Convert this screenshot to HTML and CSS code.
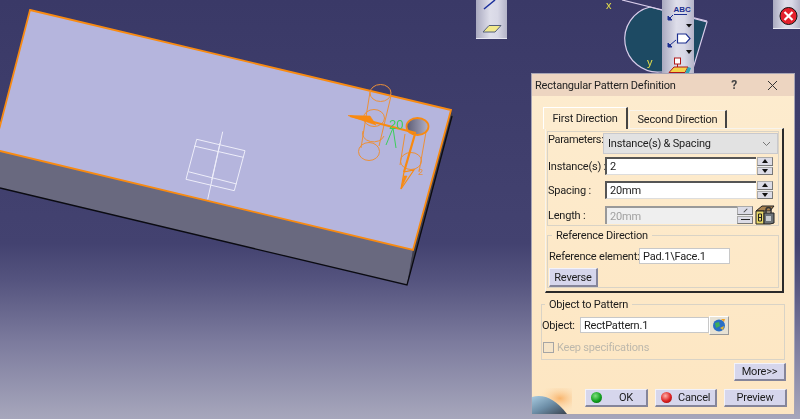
FILE: index.html
```html
<!DOCTYPE html>
<html lang="en">
<head>
<meta charset="utf-8">
<title>Rectangular Pattern Definition</title>
<link rel="stylesheet" href="styles.css">
</head>
<body>
<main class="stage">
  <svg class="scene" width="800" height="419" viewBox="0 0 800 419" aria-hidden="true">
    <defs>
      <linearGradient id="holeFill" x1="0" x2="1" y1="0" y2="0">
        <stop offset="0" stop-color="#5c5c74"/><stop offset="1" stop-color="#b2b2c8"/>
      </linearGradient>
    </defs>
    <!-- compass -->
    <path class="compass" d="M650 7 A33 33 0 0 0 660 72 L692 72 L707 22 Z"/>
    <path class="compass-line" d="M622 0 L707 21"/>
    <text class="axis" x="606" y="9">x</text>
    <text class="axis" x="647" y="66">y</text>
    <!-- solid -->
    <path class="side" d="M0 151 L413 250 L407 285 L0 188 Z"/>
    <path class="side-dark" d="M413 250 L451 111 L453 116 L407 285 Z"/>
    <path class="black" d="M0 188 L407 285 L452 116"/>
    <path class="face" d="M30 10 L451 110 L413 250 L0 151 L-2 151 L-2 133 L0 126 Z"/>
    <!-- sketch -->
    <g class="sketch">
      <path d="M196.700 139.300 L245 150.700 L234.300 190.700 L186 179.300 Z"/>
      <path d="M194 146 L243.300 157.300 M188.300 171.700 L236.700 184"/>
      <path d="M222.700 131.700 L207.700 199.300 M220 143 L211.700 180"/>
    </g>
    <!-- pattern preview -->
    <g class="thin">
      <ellipse cx="380.500" cy="93" rx="10.500" ry="8.500"/>
      <ellipse cx="374" cy="118" rx="10.500" ry="8.500"/>
      <ellipse cx="369" cy="151.500" rx="10.500" ry="9"/>
      <path d="M370 92 L361 148 M391 96 L379 146 M363 131 A10.500 8 0 0 0 384 136"/>
      <path d="M405 134 L400 165 M426 132 L419 172"/>
      <ellipse cx="411" cy="161" rx="10.500" ry="8.500"/>
    </g>
    <ellipse class="hole" cx="417.500" cy="126.500" rx="11" ry="8.500"/>
    <path class="thick" d="M350 116 L416 133 M415 134 L404 172"/>
    <path class="head" d="M348 115.500 L370 116 L376 125 Z"/>
    <path class="head-open" d="M401 189 L404 172 L414 170 Z"/>
    <path class="head" d="M401 189 L404 176 L407 176 Z"/>
    <path class="green-line" d="M393 128 L386 145 M393 128 L396 148"/>
    <text class="dim-green" x="389" y="129">20</text>
    <text class="dim-orange" x="418" y="175">2</text>
  </svg>

  <!-- toolbars -->
  <aside class="toolbar toolbar-left">
    <svg width="30" height="39" viewBox="0 0 30 39" aria-hidden="true">
      <path d="M8 9 L19 0" stroke="#1a2f9c" stroke-width="1.500" fill="none"/>
      <path d="M7 32 L13 25.500 L25 25.500 L19 32 Z" fill="#f2e98c" stroke="#55607a"/>
    </svg>
  </aside>
  <aside class="toolbar toolbar-mid">
    <svg width="32" height="73" viewBox="0 0 32 73" aria-hidden="true">
      <text x="11.500" y="12" class="abc">ABC</text>
      <path d="M12 14.500 H25 M11 15 L7 19" stroke="#1c2f8f" fill="none"/>
      <path d="M6 20 L6 16 L10 20 Z" fill="#1c2f8f" stroke="#1c2f8f"/>
      <path d="M24 24 L30 24 L27 27.500 Z" fill="#111"/>
      <path d="M15.500 34 H24 L28 38.500 L24 43 H15.500 Z" fill="#fff" stroke="#1c2f8f" stroke-width="1.200"/>
      <path d="M8 45 L14 40" stroke="#1c2f8f" fill="none"/>
      <path d="M6 47 L6 43 L10 47 Z" fill="#1c2f8f" stroke="#1c2f8f"/>
      <path d="M24 50 L30 50 L27 54 Z" fill="#111"/>
      <rect x="12.500" y="58" width="6" height="6" fill="#fff" stroke="#b01818"/>
      <path d="M15.500 64 V68" stroke="#b01818"/>
      <path d="M7 72.500 L12 67 H26 L23 72.500 Z" fill="#f3d34a" stroke="#b01818"/>
      <path d="M26 67 L23 73 H27 L29 68 Z" fill="#2fa6b8"/>
    </svg>
  </aside>
  <aside class="toolbar toolbar-close">
    <svg width="28" height="29" viewBox="0 0 28 29" aria-hidden="true">
      <circle cx="15.500" cy="16" r="8.500" fill="#e3202c" stroke="#111"/>
      <path d="M11.500 12 L19.500 20 M19.500 12 L11.500 20" stroke="#fff" stroke-width="2.200"/>
    </svg>
  </aside>

  <!-- dialog -->
  <section class="dialog">
    <header class="titlebar">
      <span class="title">Rectangular Pattern Definition</span>
      <span class="help">?</span>
      <svg class="close" width="11" height="11" viewBox="0 0 11 11" aria-hidden="true"><path d="M1 1 L10 10 M10 1 L1 10" stroke="#333" fill="none"/></svg>
    </header>
    <div class="body">
      <svg class="globe" width="40" height="26" viewBox="0 0 40 26" aria-hidden="true">
        <defs>
          <radialGradient id="glow" cx="0.700" cy="0.400" r="0.600">
            <stop offset="0" stop-color="#f8b46c"/><stop offset="1" stop-color="#fde9c8" stop-opacity="0"/>
          </radialGradient>
          <linearGradient id="earth" x1="0" x2="1" y1="0" y2="1">
            <stop offset="0" stop-color="#a8cbe0"/><stop offset=".5" stop-color="#6c8da6"/><stop offset="1" stop-color="#39424e"/>
          </linearGradient>
        </defs>
        <rect width="40" height="26" fill="url(#glow)"/>
        <path d="M0 9 Q18 4 35 26 H0 Z" fill="url(#earth)"/>
      </svg>
      <nav class="tabs">
        <span class="tab tab-active">First Direction</span>
        <span class="tab">Second Direction</span>
      </nav>
      <div class="panel">
        <div class="params">
          <div class="row row-select">
            <label class="lbl lbl-params">Parameters:</label>
            <div class="select"><span>Instance(s) &amp; Spacing</span>
              <svg width="9" height="6" viewBox="0 0 9 6" aria-hidden="true"><path d="M1 1 L4.500 4.500 L8 1" stroke="#777" fill="none"/></svg>
            </div>
          </div>
          <div class="row row-instances">
            <label class="lbl">Instance(s) :</label>
            <div class="input input-num">2</div>
            <div class="spin"><i class="up"></i><i class="down"></i></div>
          </div>
          <div class="row row-spacing">
            <label class="lbl">Spacing :</label>
            <div class="input input-num">20mm</div>
            <div class="spin"><i class="up"></i><i class="down"></i></div>
          </div>
          <div class="row row-length">
            <label class="lbl">Length :</label>
            <div class="input input-len">20mm</div>
            <div class="spin spin-off"><i class="mark-a"></i><i class="mark-b"></i></div>
            <svg class="kw" width="20" height="20" viewBox="0 0 20 20" aria-hidden="true">
              <path d="M1 6 L7 1 H19 L15 6 Z" fill="#a8814e" stroke="#222"/>
              <path d="M1 6 H9 V19 H1 Z" fill="#e9d86a" stroke="#222"/>
              <path d="M3.500 9 H6.500 V16 H3.500 Z M3.500 12.500 H6.500" fill="none" stroke="#222"/>
              <path d="M9 8 H19 V18 L15 19 H9 Z" fill="#6d7378" stroke="#222"/>
              <path d="M11 8 V5 A2.500 2.500 0 0 1 16 5 V8" fill="none" stroke="#333" stroke-width="1.500"/>
              <rect x="11" y="11" width="5" height="5" fill="#c8ccd0"/>
            </svg>
          </div>
        </div>
        <fieldset class="group group-ref">
          <legend>Reference Direction</legend>
          <div class="ref-row">
            <label class="lbl-plain lbl-ref">Reference element:</label>
            <div class="input input-ref">Pad.1\Face.1</div>
          </div>
          <button class="btn btn-reverse" type="button">Reverse</button>
        </fieldset>
      </div>
      <fieldset class="group group-object">
        <legend>Object to Pattern</legend>
        <div class="obj-row">
          <label class="lbl-plain lbl-obj">Object:</label>
          <div class="input input-obj">RectPattern.1</div>
          <button class="iconbtn" type="button" aria-label="Pick">
            <svg width="14" height="14" viewBox="0 0 14 14" aria-hidden="true">
              <circle cx="7" cy="7.500" r="6" fill="#2a6fc4"/>
              <path d="M3 5 L7 4 L8 8 L4 10 Z" fill="#3fae5a"/>
              <path d="M8 10 L12 8 L11 12 Z" fill="#e8b52c"/>
              <path d="M9 1 L13 1 L12 4 Z" fill="#f0a020"/>
            </svg>
          </button>
        </div>
        <div class="keep">
          <span class="check"></span>
          <span class="keep-label">Keep specifications</span>
        </div>
      </fieldset>
      <div class="more-row"><button class="btn btn-more" type="button">More&gt;&gt;</button></div>
      <div class="actions">
        <button class="btn btn-act btn-ok" type="button"><i class="ball ball-green"></i><span>OK</span></button>
        <button class="btn btn-act btn-cancel" type="button"><i class="ball ball-red"></i><span>Cancel</span></button>
        <button class="btn btn-act btn-preview" type="button"><span>Preview</span></button>
      </div>
    </div>
  </section>
</main>
</body>
</html>
```
FILE: styles.css
```css
* { box-sizing: border-box; }
html, body { margin: 0; padding: 0; }
body { width: 800px; height: 419px; overflow: hidden; font-family: Roboto, "Liberation Sans", Arial, sans-serif; }

.stage {
  position: relative;
  width: 800px;
  height: 419px;
  overflow: hidden;
  background: linear-gradient(180deg, #3a3967 0%, #434270 58%, #55547f 67%, #7d7c9e 82%, #a7a7bc 100%);
}

/* 3D scene */
.scene { position: absolute; left: 0; top: 0; filter: blur(0.25px); }
.compass { fill: #1d4a63; stroke: #d9cdeb; stroke-width: 1.2; }
.compass-line { stroke: #d9cdeb; stroke-width: 1.2; fill: none; }
.axis { font: 11px "Liberation Sans", sans-serif; fill: #e6e04a; }
.side { fill: #69697f; }
.side-dark { fill: #3f3f4c; }
.black { fill: none; stroke: #0b0b12; stroke-width: 1.3; }
.face { fill: #b5b5dd; stroke: #f98a10; stroke-width: 1.8; }
.sketch { fill: none; stroke: #eeeefa; stroke-width: 1; }
.thin { fill: none; stroke: #ec9038; stroke-width: 1; }
.hole { fill: url(#holeFill); stroke: #f98a10; stroke-width: 1.8; }
.thick { fill: none; stroke: #f98a10; stroke-width: 2.2; }
.head { fill: #f98a10; stroke: #f98a10; stroke-width: .6; }
.head-open { fill: none; stroke: #f98a10; stroke-width: 1.2; }
.green-line { fill: none; stroke: #3ccf5a; stroke-width: 1; }
.dim-green { font: 13px "Liberation Sans", sans-serif; fill: #3ccf5a; }
.dim-orange { font: 9px "Liberation Sans", sans-serif; fill: #ec9038; }

/* toolbars */
.toolbar {
  position: absolute;
  top: 0;
  background: linear-gradient(90deg, #a9a9bf 0%, #dedeea 45%, #d8d8e6 70%, #b4b4c8 100%);
  border-bottom: 1px solid #e8e8f2;
}
.toolbar svg { display: block; }
.toolbar-left { left: 476px; width: 31px; height: 39px; }
.toolbar-mid { left: 662px; width: 32px; height: 75px; }
.toolbar-close { left: 773px; width: 27px; height: 29px; }
.abc { font: bold 8px "Liberation Sans", sans-serif; fill: #1c2f8f; }

/* dialog */
.dialog {
  position: absolute;
  left: 531px;
  top: 73px;
  width: 264px;
  height: 342px;
  display: flex;
  flex-direction: column;
  border: 1px solid #a7a4b4;
  background: linear-gradient(180deg, #fdeccf 0%, #fde6c2 100%);
  color: #1c1c1c;
  font-size: 11px;
  letter-spacing: -0.2px;
  filter: blur(0.3px);
}
.titlebar {
  display: flex;
  align-items: center;
  height: 22px;
  flex: none;
  padding: 0 16px 0 3px;
  background: #edd5c1;
  color: #222;
}
.title { flex: 1; }
.help { margin-right: 30px; font-weight: bold; color: #444; font-size: 12px; }
.close { display: block; }

.body { position: relative; flex: 1; display: flex; flex-direction: column; }
.globe { position: absolute; left: 0; bottom: 0; }

.tabs { display: flex; align-items: flex-end; height: 21px; margin: 11px 0 0 11px; position: relative; z-index: 1; }
.tab {
  display: flex;
  align-items: center;
  justify-content: center;
  height: 18px;
  width: 98px;
  margin-left: 1px;
  border-top: 1px solid #f8f4ec;
  border-right: 2px solid #444;
  border-left: 1px solid #f8f4ec;
}
.tab-active {
  height: 22px;
  width: 85px;
  margin: 0 0 -1px 0;
  border-left: 1px solid #fff;
  border-top: 1px solid #fff;
  background: #fdeccf;
}

.panel {
  width: 239px;
  height: 165px;
  margin-left: 13px;
  padding: 2px 3px 0 1px;
  display: flex;
  flex-direction: column;
  border-top: 1px solid #f8f4ec;
  border-left: 1px solid #f8f4ec;
  border-right: 2px solid #2a2a2a;
  border-bottom: 2px solid #2a2a2a;
}
.params {
  height: 95px;
  border: 1px solid #d9d3c6;
  padding: 1px 0 0 0;
  display: flex;
  flex-direction: column;
}
.row { display: flex; align-items: center; }
.row-select { height: 21px; }
.row-instances { height: 18px; margin-top: 3px; }
.row-spacing { height: 18px; margin-top: 6px; }
.row-length { height: 18px; margin-top: 7px; }
.lbl { width: 57px; flex: none; white-space: nowrap; }
.lbl-params { width: 55px; align-self: flex-start; letter-spacing: -0.35px; }
.select {
  width: 175px;
  height: 21px;
  display: flex;
  align-items: center;
  justify-content: space-between;
  padding: 0 6px 0 4px;
  background: #e2e2e2;
  border: 1px solid #c9c9cd;
}
.input {
  background: #fff;
  height: 100%;
  display: flex;
  align-items: center;
  padding-left: 3px;
  white-space: nowrap;
}
.input-num { width: 151px; border-top: 2px solid #555; border-left: 2px solid #555; border-bottom: 1px solid #ddd; }
.input-len { width: 132px; border-top: 2px solid #999; border-left: 2px solid #999; background: #efefef; color: #a0a0a0; }
.spin {
  width: 16px;
  height: 100%;
  margin-left: 1px;
  display: flex;
  flex-direction: column;
  gap: 1px;
  background: #eee;
}
.spin i {
  position: relative;
  flex: 1;
  display: flex;
  align-items: center;
  justify-content: center;
  background: #dcdce6;
  border-right: 1px solid #777;
  border-bottom: 1px solid #777;
  border-left: 1px solid #aaa;
  border-top: 1px solid #aaa;
}
.spin .up::after { content: ""; border: 3.500px solid transparent; border-top: 0; border-bottom: 4px solid #111; }
.spin .down::after { content: ""; border: 3.500px solid transparent; border-bottom: 0; border-top: 4px solid #111; }
.spin-off { margin-left: 0; }
.spin-off .mark-a::after { content: ""; width: 5px; height: 1px; background: #444; transform: rotate(-45deg); }
.spin-off .mark-b::after { content: ""; width: 9px; height: 1px; background: #222; }
.kw { margin-left: 2px; flex: none; }

.group { margin: 0; padding: 0; border: 1px solid #d9d3c6; min-width: 0; }
.group legend { padding: 0 4px; margin-left: 3px; line-height: 13px; }
.group-ref { height: 59px; width: 232px; margin-top: 3px; padding: 6px 0 0 1px; }
.ref-row { display: flex; align-items: center; height: 16px; }
.lbl-plain { white-space: nowrap; }
.lbl-ref { width: 90px; flex: none; }
.lbl-obj { width: 38px; flex: none; }
.input-ref { width: 91px; border: 1px solid #c8c8c8; }
.btn {
  font: inherit;
  letter-spacing: inherit;
  color: #1c1c1c;
  padding: 0;
  border: 0;
  border-top: 1px solid #f2f2fa;
  border-left: 1px solid #f2f2fa;
  border-right: 2px solid #85859a;
  border-bottom: 2px solid #85859a;
  background: #d6d6ec;
  display: flex;
  align-items: center;
  justify-content: center;
}
.btn-reverse { width: 49px; height: 19px; margin-top: 4px; }

.group-object { width: 244px; height: 62px; margin: 5px 0 0 9px; padding: 5px 0 0 0; }
.obj-row { display: flex; align-items: center; height: 18px; }
.input-obj { width: 129px; height: 16px; border: 1px solid #c8c8c8; }
.iconbtn {
  width: 20px;
  height: 19px;
  padding: 0;
  display: flex;
  align-items: center;
  justify-content: center;
  background: #e7e2d4;
  border: 0;
  border-right: 1px solid #999;
  border-bottom: 1px solid #999;
  border-top: 1px solid #fff;
  border-left: 1px solid #fff;
}
.keep { display: flex; align-items: center; gap: 3px; margin: 7px 0 0 1px; }
.check { width: 11px; height: 11px; border: 1px solid #a5a5a5; background: #f5e4c8; }
.keep-label { color: #bdb8ac; }

.more-row { display: flex; justify-content: flex-end; margin: 3px 8px 0 0; }
.btn-more { width: 52px; height: 18px; }
.actions { position: relative; display: flex; gap: 7px; margin: 8px 0 0 53px; }
.btn-act { width: 63px; height: 18px; }
.btn-ok { justify-content: flex-start; padding-left: 5px; }
.btn-ok span { margin-left: 17px; }
.btn-cancel { width: 62px; justify-content: flex-start; padding-left: 5px; }
.btn-cancel span { margin-left: 6px; }
.ball { width: 11px; height: 11px; border-radius: 50%; display: block; }
.ball-green { background: radial-gradient(circle at 40% 35%, #7fe07f, #12a01e 55%, #06560e); }
.ball-red { background: radial-gradient(circle at 40% 35%, #ffb0a8, #dc2020 55%, #7c0c0c); }
```
